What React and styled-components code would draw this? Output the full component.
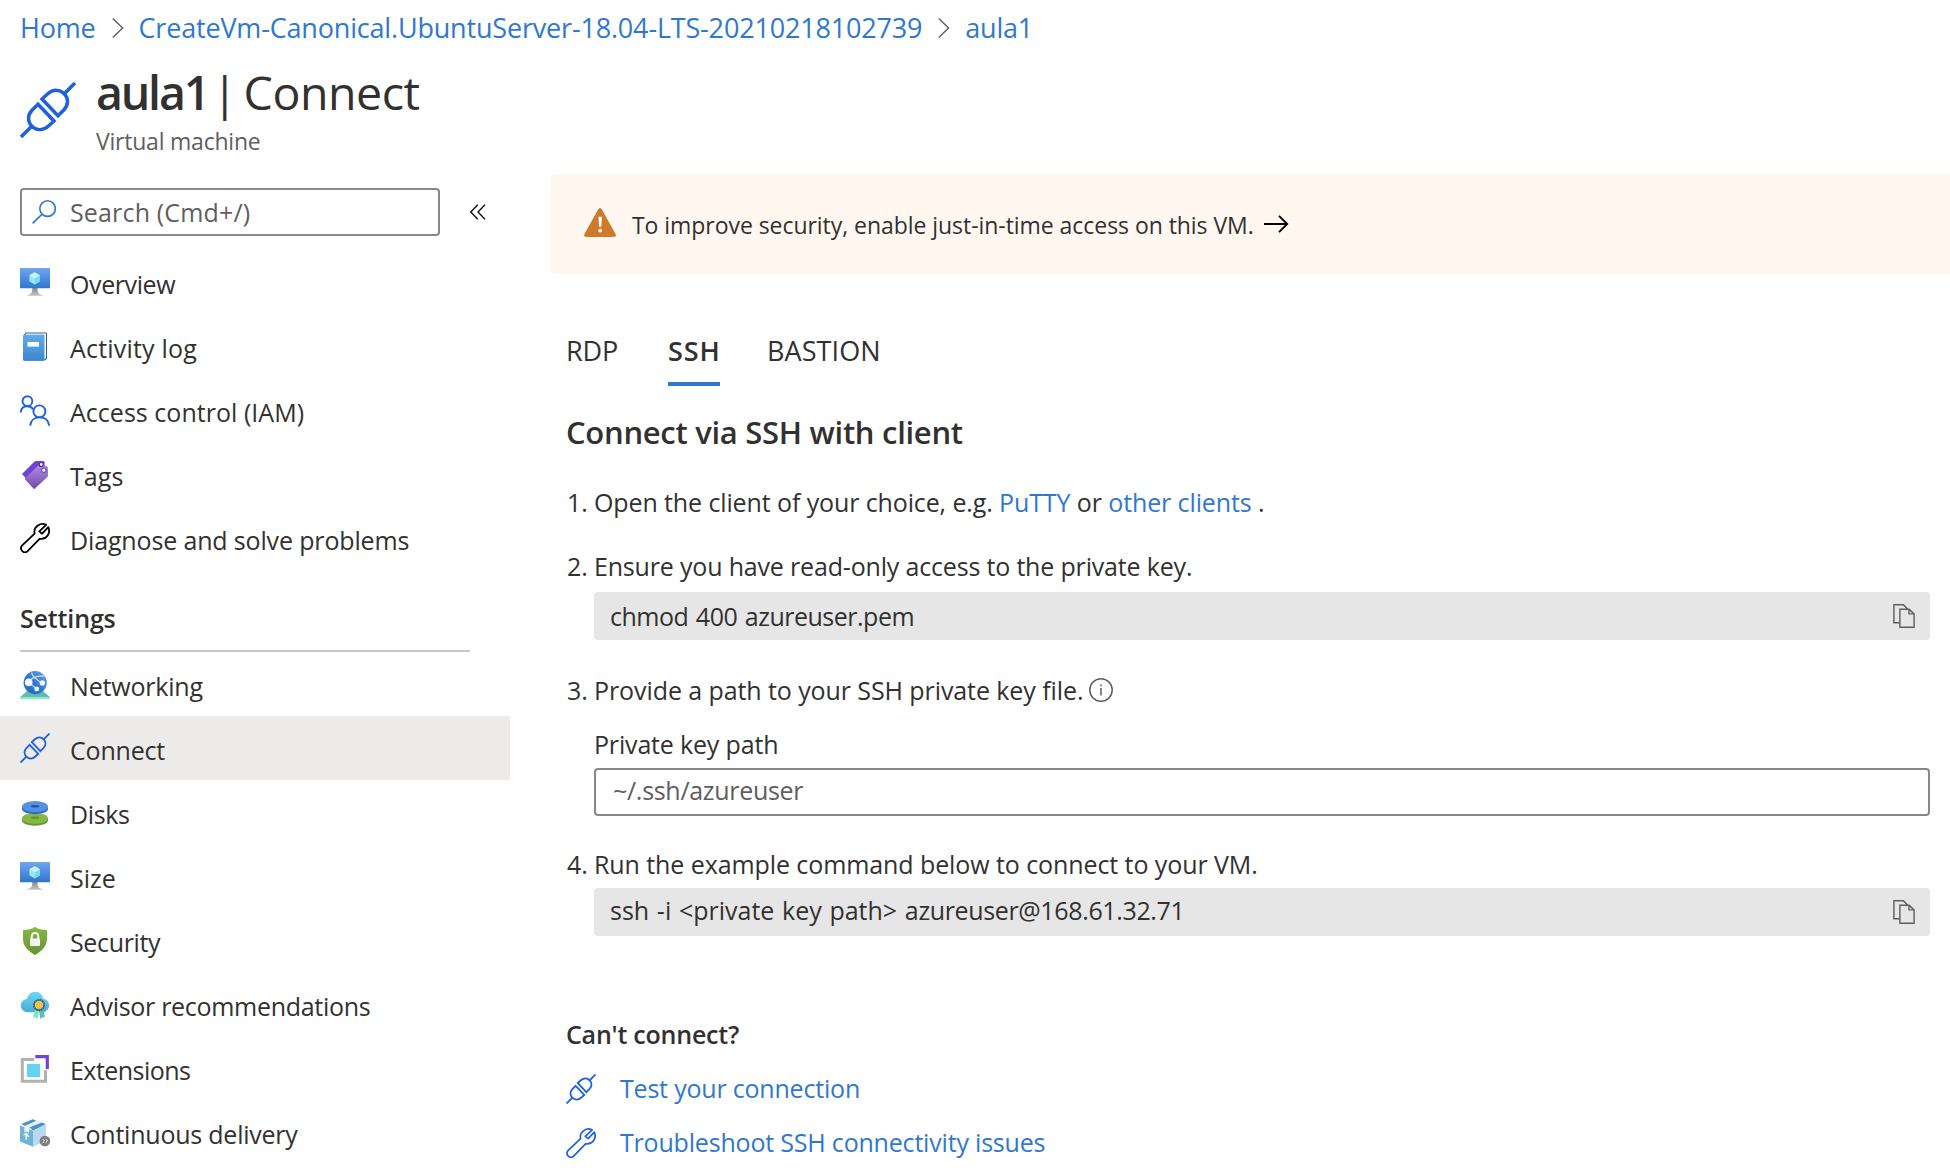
import React from "react";
import styled, { createGlobalStyle } from "styled-components";

const colors = {
  text: "#323130",
  muted: "#605e5c",
  link: "#2f78ce",
  line: "#1f61dc",
  border: "#8a8886",
};

const GlobalStyle = createGlobalStyle`
  * { box-sizing: border-box; }
  body {
    margin: 0;
    background: #fff;
    color: ${colors.text};
    font-family: "Open Sans", "Noto Sans", sans-serif;
    font-size: 25px;
  }
  svg { display: block; flex: none; }
  a { color: ${colors.link}; text-decoration: none; }
`;

const Text = styled.span`
  letter-spacing: ${(p) => p.$track || 0}px;
  word-spacing: ${(p) => p.$words || 0}px;
  white-space: pre;
`;

const Page = styled.div`
  width: 1950px;
  height: 1174px;
  overflow: hidden;
  display: flex;
  flex-direction: column;
`;

const Breadcrumb = styled.nav`
  display: flex;
  align-items: center;
  height: 55px;
  padding-left: 20px;
  font-size: 27px;
  line-height: 55px;

  svg { margin: 0 15px 0 16px; }
`;

const TitleBar = styled.header`
  display: flex;
  gap: 20px;
  height: 107px;
  padding-left: 20px;

  > svg { margin-top: 27px; }
`;

const TitleText = styled.div`
  display: flex;
  flex-direction: column;
  padding-top: 9px;
`;

const Title = styled.h1`
  display: flex;
  margin: 0;
  font-size: 46.5px;
  font-weight: 400;
  line-height: 56px;
`;

const ResourceName = styled.span`
  width: 116px;
  font-weight: 600;
  letter-spacing: -2.2px;
`;

const Divider = styled.span`
  margin-right: 6px;
`;

const Subtitle = styled.div`
  font-size: 23px;
  line-height: 42px;
  color: ${colors.muted};
`;

const Body = styled.div`
  display: grid;
  grid-template-columns: 510px 1fr;
  flex: 1;
`;

const Sidebar = styled.aside`
  padding-top: 26px;
`;

const SearchRow = styled.div`
  display: flex;
  align-items: center;
  gap: 30px;
  padding-left: 20px;
  margin-bottom: 14px;
`;

const SearchBox = styled.div`
  display: flex;
  align-items: center;
  gap: 14px;
  width: 420px;
  height: 48px;
  padding-left: 10px;
  border: 2px solid ${colors.border};
  border-radius: 4px;
  line-height: 44px;
  color: ${colors.muted};
`;

const NavItem = styled.div`
  display: flex;
  gap: 20px;
  height: 64px;
  padding: 4px 0 0 20px;
  line-height: 60px;
  background: ${(p) => (p.$active ? "#edebe9" : "transparent")};

  svg { margin-top: 13px; }
`;

const NavHeading = styled.h2`
  width: 450px;
  height: 82px;
  margin: 0 0 0 20px;
  padding-top: 17px;
  border-bottom: 2px solid #c8c8c8;
  font-size: 25px;
  font-weight: 600;
  line-height: 62px;
`;

const Main = styled.main`
  padding: 12px 0 0 41px;
`;

const Banner = styled.div`
  display: flex;
  align-items: center;
  height: 100px;
  padding: 2px 0 0 33px;
  border-radius: 4px 0 0 4px;
  background: #fff7f0;
  font-size: 23px;
`;

const WarningSlot = styled.span`
  margin: 0 16px 5px 0;
`;

const ArrowSlot = styled.span`
  margin: 0 0 2px 10px;
`;

const Content = styled.div`
  padding: 0 20px 0 15px;
`;

const Tabs = styled.div`
  display: flex;
  gap: 47px;
`;

const Tab = styled.div`
  width: ${(p) => p.$width}px;
  height: 112px;
  padding-top: 50px;
  border-bottom: 4px solid ${(p) => (p.$active ? colors.link : "transparent")};
  font-size: 27px;
  font-weight: ${(p) => (p.$active ? 600 : 400)};
  line-height: 53px;
`;

const Heading = styled.h2`
  margin: 0;
  padding-top: 20px;
  font-size: 31px;
  font-weight: 600;
  line-height: 52px;
`;

const Step = styled.section`
  display: grid;
  grid-template-columns: 27px 1fr;
  margin: ${(p) => p.$top}px 0 0 1px;
  line-height: 40px;
`;

const StepBody = styled.div`
  min-width: 0;
`;

const StepLine = styled.div`
  display: flex;
  align-items: center;
  height: 40px;

  svg { margin-left: 6px; }
`;

const CodeBox = styled.div`
  display: flex;
  justify-content: space-between;
  height: 48px;
  margin-top: ${(p) => p.$top}px;
  padding: 0 15px 0 16px;
  border-radius: 4px;
  background: #e6e6e6;
  line-height: ${(p) => p.$line || 48}px;

  svg { margin-top: 12px; }
`;

const FieldLabel = styled.div`
  margin: 14px 0 4px;
`;

const Input = styled.div`
  height: 48px;
  padding-left: 17px;
  border: 2px solid ${colors.border};
  border-radius: 4px;
  color: ${colors.muted};
  line-height: 40px;
`;

const HelpHeading = styled.h3`
  margin: 78px 0 8px;
  font-size: 25px;
  font-weight: 600;
  line-height: 40px;
`;

const HelpLink = styled.a`
  display: flex;
  gap: 24px;
  height: 54px;
  line-height: 52px;

  svg { margin-top: 12px; }
`;

const Crumb = () => (
  <svg width="12" height="20" viewBox="0 0 12 20" fill="none" stroke="#605e5c" strokeWidth="1.4">
    <path d="M.8.6 10.6 10 .8 19.4" />
  </svg>
);

const Plug = ({ size = 30 }) => (
  <svg width={size} height={size} viewBox="0 0 56 56" fill="none" stroke={colors.line} strokeWidth="3.5">
    <path d="M1 55 12 44" />
    <path d="M18 22.3 34 39 28.2 44.3C22.5 49.3 15.8 48.2 11.8 44.2 7.6 40 7.2 33.4 12 28.3Z" />
    <path d="M55 1 44 12" />
    <path d="M38 33.7 22 17 27.8 11.7C33.5 6.7 40.2 7.8 44.2 11.8 48.4 16 48.8 22.6 44 27.7Z" />
  </svg>
);

const Wrench = ({ color = "#000", weight = 1.8 }) => (
  <svg width="30" height="30" viewBox="0 0 30 30" fill="none" stroke={color} strokeWidth={weight} strokeLinejoin="round">
    <path d="M26.2 1.900C20.600-.900 13.200 3.600 14.600 10.600L2.200 22.400C-1.200 26.200 3.800 31.600 7.600 28.200L19.600 15.800C26.400 16.900 31 10.600 28.300 4.200L22.100 10.700 19.300 8.400Z" />
  </svg>
);

const SearchIcon = () => (
  <svg width="24" height="24" viewBox="0 0 24 24" fill="none" stroke={colors.link} strokeWidth="1.6">
    <circle cx="15.6" cy="8.6" r="7.8" />
    <path d="M10.1 14.1.6 23.4" />
  </svg>
);

const Collapse = () => (
  <svg width="16" height="16" viewBox="0 0 16 16" fill="none" stroke="#111" strokeWidth="1.4">
    <path d="M7.8.8.8 8l7 7.2M15 .8 8 8l7 7.2" />
  </svg>
);

const Monitor = ({ id }) => (
  <svg width="30" height="30" viewBox="0 0 30 30">
    <defs>
      <linearGradient id={id} x1="0" y1="0" x2="0" y2="1">
        <stop offset="0" stopColor="#70a5ee" />
        <stop offset="1" stopColor="#3076cc" />
      </linearGradient>
      <linearGradient id={id + "-stand"} x1="0" y1="0" x2="0" y2="1">
        <stop offset="0" stopColor="#8a8a8a" />
        <stop offset="1" stopColor="#c4c4c4" />
      </linearGradient>
    </defs>
    <path d="M12.3 21h5.2c0 4.500 1 6.500 4.900 7v.8H7.400V28c3.900-.5 4.900-2.500 4.900-7z" fill={`url(#${id}-stand)`} />
    <rect y="1" width="30" height="20.300" rx=".6" fill={`url(#${id})`} />
    <path d="M14.700 5.200 20 8.300v6l-5.300 3.200-5.300-3.200v-6z" fill="#9be8fb" />
    <path d="M14.700 5.200 20 8.300l-5.300 3.100-5.300-3.100z" fill="#c6f3fd" />
    <path d="M14.700 11.400 20 8.300v6l-5.300 3.200z" fill="#74dcf7" />
  </svg>
);

const Book = () => (
  <svg width="30" height="30" viewBox="0 0 30 30">
    <defs>
      <linearGradient id="book" x1="0" y1="0" x2="0" y2="1">
        <stop offset="0" stopColor="#62abe8" />
        <stop offset="1" stopColor="#3c87d2" />
      </linearGradient>
    </defs>
    <path d="M3 5.500 5.500 1.500H26q1 0 1 1V27q-.3 1.800-2.300 2.600H4z" fill="#2a609c" />
    <path d="M5 3.800 6.200 2.500H26v24.300l-1.800 2V3.800z" fill="#fff" />
    <path d="M3 4h20.300q1 0 1 1v23.700q0 1-1 1H4q-1 0-1-1z" fill="url(#book)" />
    <rect x="7.500" y="11" width="11.500" height="4.600" fill="#fff" />
  </svg>
);

const People = () => (
  <svg width="30" height="31" viewBox="0 0 30 31" fill="none" stroke={colors.line} strokeWidth="1.900">
    <circle cx="7.400" cy="6.200" r="4.900" />
    <path d="M.8 17.500C1 13 4 11.200 7.300 11.200c2.600 0 4.600 1 5.900 3" />
    <circle cx="19.400" cy="16.400" r="6" />
    <path d="M10.200 30.700c.5-5.500 4.500-8.300 9.400-8.300s8.900 2.800 9.600 8.300" />
  </svg>
);

const Tag = () => (
  <svg width="30" height="31" viewBox="0 0 30 31">
    <defs>
      <linearGradient id="tag" x1="0" y1="0" x2="0" y2="1">
        <stop offset="0" stopColor="#b18be0" />
        <stop offset="1" stopColor="#6f4bab" />
      </linearGradient>
    </defs>
    <path d="M2 15 14.500 2.400Q15 2 16 2h7q1.300 0 1.500 1.300l.2 4L6 19.500z" fill="#7243d2" />
    <path d="M5.200 19.300 18.200 6.600Q19 6 20 6l6.500.8Q28 7.500 28 9v7.500q0 .8-.6 1.400L14.200 30.200 5 20.500z" fill="url(#tag)" />
    <circle cx="21.200" cy="5.500" r="2" fill="#fff" stroke="#4c2a94" strokeWidth="1.100" />
    <circle cx="23.800" cy="11.200" r="2.200" fill="#fff" stroke="#6b45b5" strokeWidth="1.100" />
  </svg>
);

const Network = () => (
  <svg width="30" height="30" viewBox="0 0 30 30">
    <defs>
      <linearGradient id="globe" x1="0" y1="1" x2="1" y2="0">
        <stop offset="0" stopColor="#2468bd" />
        <stop offset=".5" stopColor="#3379d1" />
        <stop offset="1" stopColor="#6fa5ee" />
      </linearGradient>
    </defs>
    <path d="M7 22h16l7 6.200H0z" fill="#5fbdb0" />
    <path d="M0 28h30v2H0z" fill="#8aeccf" />
    <circle cx="15.200" cy="13.600" r="11.600" fill="url(#globe)" />
    <g stroke="#b9d4f6" strokeWidth="1.500" fill="none">
      <path d="M9 13C11 9 16 6.500 25 7M11.500 3.500C12 7 17 11 22 14M9 14l8 6" />
    </g>
    <circle cx="8.700" cy="13.400" r="3.800" fill="#f4f6fa" />
    <circle cx="22.300" cy="14" r="2.700" fill="#f4f6fa" />
    <circle cx="16.700" cy="20" r="2.400" fill="#f4f6fa" />
  </svg>
);

const Disks = () => (
  <svg width="30" height="30" viewBox="0 0 30 30">
    <path d="M2 21v2.600c0 3 5.800 5.200 13 5.200s13-2.200 13-5.200V21z" fill="#699533" />
    <ellipse cx="15" cy="21.400" rx="13" ry="5.400" fill="#86b844" />
    <ellipse cx="15" cy="20.700" rx="4.300" ry="1.100" fill="#628d30" />
    <path d="M2 9.500v2.600c0 3 5.800 5.200 13 5.200s13-2.200 13-5.200V9.500z" fill="#2e6fc4" />
    <ellipse cx="15" cy="9.600" rx="13" ry="5.500" fill="#5591e2" />
    <ellipse cx="15" cy="9.200" rx="4.300" ry="1.200" fill="#1f5698" />
  </svg>
);

const Shield = () => (
  <svg width="30" height="30" viewBox="0 0 30 30">
    <defs>
      <linearGradient id="shield" x1="0" y1="0" x2="0" y2="1">
        <stop offset="0" stopColor="#87b945" />
        <stop offset="1" stopColor="#669236" />
      </linearGradient>
    </defs>
    <path d="M15 1.700c3.500 2.800 7 3 11 3 .7 0 1 .3 1 1V14c0 8-6.500 12.500-12 16C9.500 26.500 3 22 3 14V5.700c0-.7.300-1 1-1 4 0 7.500-.2 11-3z" fill="url(#shield)" />
    <path d="M11.700 14v-2.700a3.300 3.300 0 0 1 6.600 0V14" fill="none" stroke="#fff" strokeWidth="2" />
    <rect x="10" y="13.400" width="10" height="7.600" rx=".7" fill="#f3f3f3" />
  </svg>
);

const Advisor = () => (
  <svg width="30" height="30" viewBox="0 0 30 30">
    <defs>
      <linearGradient id="cloud" x1="0" y1="0" x2="0" y2="1">
        <stop offset="0" stopColor="#6bdaf6" />
        <stop offset="1" stopColor="#4cabcf" />
      </linearGradient>
    </defs>
    <path d="M7.500 23.200C3.500 23 .8 20 .8 16.500c0-3.500 2.500-6 6-6.500C8 5.500 11 2.700 15.200 2.700c4.200 0 7.500 3 7.900 7 3.500.4 6 3.100 6 6.600 0 3.700-2.700 6.700-6.500 6.900z" fill="url(#cloud)" />
    <path d="M15 21 19 22.500 17.800 30l-2.200-1.800-2.600.6z" fill="#7fe3cb" />
    <path d="M23.500 21 19.300 22.500 20.200 30l2-1.800 2.300.6q.5-4-1-7.800z" fill="#5fbfae" />
    <circle cx="19" cy="16" r="5.300" fill="none" stroke="#275393" strokeWidth="1.500" strokeDasharray="1.600 .7" />
    <circle cx="19" cy="16" r="4.700" fill="#f7c244" stroke="#275393" strokeWidth=".8" />
  </svg>
);

const Extensions = () => (
  <svg width="30" height="30" viewBox="0 0 30 30" fill="none">
    <path d="M14.300 6.600H2.300v21.600h23.200V17.300" stroke="#b1b1b1" strokeWidth="3" />
    <rect x="7" y="11" width="13" height="13" fill="#66d2f1" />
    <path d="M15.300 3.600h12v12.300" stroke="#7243d2" strokeWidth="3.200" />
  </svg>
);

const Delivery = () => (
  <svg width="30" height="30" viewBox="0 0 30 30">
    <path d="M0 8.200 13.300 2.300 26 7.200 13 13.500z" fill="#e6f2f9" />
    <path d="M0 8.500 13 13.800v15.900L0 24.500z" fill="#6fb4d8" />
    <path d="M13 13.800 26 7.800v16L13 29.700z" fill="#b9d9ec" />
    <path d="M1.200 7 12.800 2.300l3.600 1.400L5 8.700zM9.500 10.500 21.800 5.600l4 1.700L13 13.400z" fill="#4a93c4" />
    <path d="M4.500 9.900 9 11.700v4l-2.200-1.400-2.300.6z" fill="#fff" />
    <path d="M6.200 22.700v-6M3.600 18.200l2.600-2 2.600 4" fill="none" stroke="#fff" strokeWidth="1.400" />
    <circle cx="24.900" cy="24" r="5.300" fill="#7d7d7d" />
    <path d="m22.600 22.100 1.900 1.900-1.900 1.900M25.600 22.100l1.900 1.900-1.900 1.900" fill="none" stroke="#fff" strokeWidth=".9" />
  </svg>
);

const Warning = () => (
  <svg width="32" height="29" viewBox="0 0 32 29">
    <path d="M14.300 1.200q1.700-2.200 3.400 0L31.600 26q1 2.800-1.800 3H2.200Q-.6 28.800.4 26z" fill="#d1792b" />
    <path d="M14.500 8.700h3.400l-.6 10h-2.200z" fill="#fff" />
    <circle cx="16.200" cy="22.600" r="1.900" fill="#fff" />
  </svg>
);

const Arrow = () => (
  <svg width="25" height="18" viewBox="0 0 25 18" fill="none" stroke="#000" strokeWidth="1.900">
    <path d="M0 9h23M15 .8 23.200 9 15 17.200" />
  </svg>
);

const Info = () => (
  <svg width="24" height="24" viewBox="0 0 24 24" fill="none" stroke={colors.muted} strokeWidth="1.500">
    <circle cx="12" cy="12" r="11.200" />
    <path d="M12 10v7.500M12 6.500v1.800" />
  </svg>
);

const Copy = () => (
  <svg width="22" height="24" viewBox="0 0 22 24" fill="none" stroke={colors.muted} strokeWidth="1.400">
    <path d="M6.700 18.700H.9V.8h9.600L14.600 5" />
    <path d="M6.900 5.300h9.200l5 4.600v13.300H6.900z" />
    <path d="M16 5.300v4.600h5" />
  </svg>
);

const resourceItems = [
  ["Overview", -0.4, <Monitor id="vm" />],
  ["Activity log", 0.2, <Book />],
  ["Access control (IAM)", 0.03, <People />],
  ["Tags", 0.05, <Tag />],
  ["Diagnose and solve problems", -0.15, <Wrench />],
];

const settingsItems = [
  ["Networking", -0.19, <Network />],
  ["Connect", -0.19, <Plug />],
  ["Disks", -0.35, <Disks />],
  ["Size", 0, <Monitor id="size" />],
  ["Security", -0.35, <Shield />],
  ["Advisor recommendations", -0.3, <Advisor />],
  ["Extensions", -0.53, <Extensions />],
  ["Continuous delivery", -0.23, <Delivery />],
];

const NavList = ({ items, active }) =>
  items.map(([label, track, icon]) => (
    <NavItem key={label} $active={label === active}>
      {icon}
      <Text $track={track}>{label}</Text>
    </NavItem>
  ));

export default function App() {
  return (
    <Page>
      <GlobalStyle />
      <Breadcrumb>
        <Text as="a" $track={-0.2}>Home</Text>
        <Crumb />
        <Text as="a" $track={-0.18}>CreateVm-Canonical.UbuntuServer-18.04-LTS-20210218102739</Text>
        <Crumb />
        <Text as="a" $track={-0.2}>aula1</Text>
      </Breadcrumb>
      <TitleBar>
        <Plug size={56} />
        <TitleText>
          <Title>
            <ResourceName>aula1</ResourceName>
            <Divider>|</Divider>
            <Text $track={-0.45}>Connect</Text>
          </Title>
          <Subtitle>
            <Text $track={-0.22}>Virtual machine</Text>
          </Subtitle>
        </TitleText>
      </TitleBar>
      <Body>
        <Sidebar>
          <SearchRow>
            <SearchBox>
              <SearchIcon />
              <Text $track={0.16}>Search (Cmd+/)</Text>
            </SearchBox>
            <Collapse />
          </SearchRow>
          <NavList items={resourceItems} />
          <NavHeading>
            <Text $track={-0.15}>Settings</Text>
          </NavHeading>
          <NavList items={settingsItems} active="Connect" />
        </Sidebar>
        <Main>
          <Banner>
            <WarningSlot><Warning /></WarningSlot>
            <Text $track={-0.05}>To improve security, enable just-in-time access on this VM.</Text>
            <ArrowSlot><Arrow /></ArrowSlot>
          </Banner>
          <Content>
            <Tabs>
              <Tab $width={55}><Text $track={-0.13}>RDP</Text></Tab>
              <Tab $width={52} $active><Text $track={0.9}>SSH</Text></Tab>
              <Tab $width={114}><Text $track={0.1}>BASTION</Text></Tab>
            </Tabs>
            <Heading>
              <Text $track={-0.29}>Connect via SSH with client</Text>
            </Heading>
            <Step $top={24}>
              <span>1.</span>
              <StepBody>
                <StepLine>
                  <Text $track={-0.13} $words={0.1}>
                    Open the client of your choice, e.g. <a>PuTTY</a> or <a>other clients</a> .
                  </Text>
                </StepLine>
              </StepBody>
            </Step>
            <Step $top={24}>
              <span>2.</span>
              <StepBody>
                <StepLine>
                  <Text $track={-0.175}>Ensure you have read-only access to the private key.</Text>
                </StepLine>
                <CodeBox $top={6}>
                  <Text $track={-0.49} $words={1.5}>chmod 400 azureuser.pem</Text>
                  <Copy />
                </CodeBox>
              </StepBody>
            </Step>
            <Step $top={30}>
              <span>3.</span>
              <StepBody>
                <StepLine>
                  <Text $track={-0.085}>Provide a path to your SSH private key file.</Text>
                  <Info />
                </StepLine>
                <FieldLabel>
                  <Text $track={-0.17}>Private key path</Text>
                </FieldLabel>
                <Input>
                  <Text $track={-0.3}>~/.ssh/azureuser</Text>
                </Input>
              </StepBody>
            </Step>
            <Step $top={28}>
              <span>4.</span>
              <StepBody>
                <StepLine>
                  <Text $track={-0.085}>Run the example command below to connect to your VM.</Text>
                </StepLine>
                <CodeBox $top={4} $line={44}>
                  <Text $words={1.2}>
                    {"ssh -i <private key path> "}
                    <Text $track={-0.36}>azureuser@168.61.32.71</Text>
                  </Text>
                  <Copy />
                </CodeBox>
              </StepBody>
            </Step>
            <HelpHeading>
              <Text $track={-0.22}>Can't connect?</Text>
            </HelpHeading>
            <HelpLink>
              <Plug />
              <Text $track={-0.2}>Test your connection</Text>
            </HelpLink>
            <HelpLink>
              <Wrench color={colors.line} weight={1.7} />
              <Text $track={-0.19}>Troubleshoot SSH connectivity issues</Text>
            </HelpLink>
          </Content>
        </Main>
      </Body>
    </Page>
  );
}
